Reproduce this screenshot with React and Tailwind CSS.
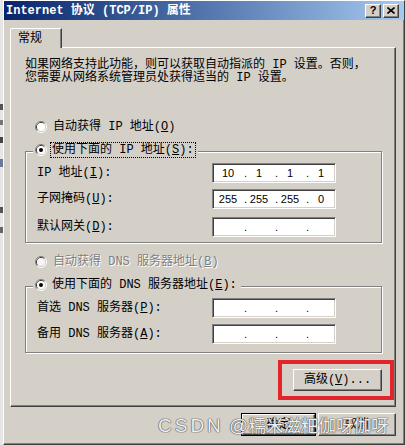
import React from 'react';

const font = "font-['Liberation_Mono','Noto_Sans_CJK_SC',monospace]";

const Radio = ({ checked, disabled }) => (
  <svg width="12" height="12" viewBox="0 0 12 12" className="shrink-0">
    <path d="M2.11 9.89A5.5 5.5 0 0 1 9.89 2.11" fill="none" stroke="#808080" />
    <path d="M9.89 2.11A5.5 5.5 0 0 1 2.11 9.89" fill="none" stroke="#ffffff" />
    <path d="M2.82 9.18A4.5 4.5 0 0 1 9.18 2.82" fill="none" stroke="#404040" />
    <path d="M9.18 2.82A4.5 4.5 0 0 1 2.82 9.18" fill="none" stroke="#d4d0c8" />
    <circle cx="6" cy="6" r="4" fill={disabled ? '#f4f4f4' : '#ffffff'} />
    {checked && <circle cx="6" cy="6" r="2" fill="#000000" />}
  </svg>
);

const IpBox = ({ parts = ['', '', '', ''] }) => (
  <div className="w-[124px] h-[20px] shrink-0 flex items-center pl-[4px] bg-white border border-t-[#808080] border-l-[#808080] border-b-white border-r-white shadow-[inset_1px_1px_0_#404040,inset_-1px_-1px_0_#d4d0c8] font-['Liberation_Sans',sans-serif] text-[11px] text-black">
    {parts.map((p, i) => (
      <React.Fragment key={i}>
        <span className="w-[22px] text-center">{p}</span>
        {i < 3 && <span className="ml-[4px] w-[5px] text-center">.</span>}
      </React.Fragment>
    ))}
  </div>
);

const FieldRow = ({ label, parts, className }) => (
  <div className={`flex items-center h-[20px] pl-[11px] ${className}`}>
    <span className="w-[175px] whitespace-pre">{label}</span>
    <IpBox parts={parts} />
  </div>
);

const Raised = ({ children, className }) => (
  <div className={`flex items-center justify-center bg-[#d4d0c8] border border-t-white border-l-white border-r-[#404040] border-b-[#404040] shadow-[inset_-1px_-1px_0_#808080] ${className}`}>
    {children}
  </div>
);

const App = () => {
  return (
    <div className={`relative w-[405px] h-[445px] flex overflow-hidden bg-[#d4d0c8] text-[12px] text-black ${font}`}>
      {/* window behind */}
      <div className="w-[3px] shrink-0 flex flex-col bg-[#e6e6e6]">
        <div className="h-[104px]" />
        <div className="h-[6px] bg-[#555]" />
        <div className="h-[10px]" />
        <div className="h-[5px] bg-[#777]" />
        <div className="h-[12px]" />
        <div className="h-[6px] bg-[#444]" />
        <div className="h-[16px]" />
        <div className="h-[8px] bg-[#6b7a99]" />
        <div className="h-[40px]" />
        <div className="h-[6px] bg-[#555]" />
        <div className="h-[14px]" />
        <div className="h-[6px] bg-[#666]" />
      </div>

      <div className="flex-1 flex flex-col border-l border-t border-r border-b border-white border-r-[#404040] border-b-[#404040] shadow-[inset_-1px_-1px_0_#808080]">
        {/* title bar */}
        <div className="h-[19px] shrink-0 flex items-center pl-[2px] pr-[5px] bg-linear-to-r from-[#0a246a] to-[#a6caf0]">
          <span className="font-bold text-white text-[12px] whitespace-pre">Internet 协议 (TCP/IP) 属性</span>
          <div className="ml-auto flex gap-[2px]">
            <Raised className="w-[16px] h-[14px]">
              <span className="font-['Liberation_Sans',sans-serif] font-bold text-[11px] leading-none">?</span>
            </Raised>
            <Raised className="w-[16px] h-[14px]">
              <svg width="8" height="7" viewBox="0 0 8 7">
                <path d="M0.5 0.5L7.5 6.5M7.5 0.5L0.5 6.5" stroke="#000" strokeWidth="1.6" />
              </svg>
            </Raised>
          </div>
        </div>

        <div className="flex-1 flex flex-col pl-[6px] pr-[8px] pt-[8px]">
          {/* tab */}
          <div className="relative z-10 -mb-[1px] w-[52px] h-[20px] flex items-center pl-[7px] bg-[#d4d0c8] border-t border-l border-r border-white border-r-[#404040] rounded-tl-[2px] shadow-[inset_-1px_0_0_#808080]">
            常规
          </div>

          {/* panel */}
          <div className="h-[360px] shrink-0 flex flex-col border border-t-white border-l-white border-r-[#404040] border-b-[#404040] shadow-[inset_-1px_-1px_0_#808080]">
            <p className="mt-[11px] ml-[14px] leading-[13px] whitespace-pre">
              如果网络支持此功能，则可以获取自动指派的 IP 设置。否则，
              <br />
              您需要从网络系统管理员处获得适当的 IP 设置。
            </p>

            <div className="mt-[34px] ml-[24px] h-[16px] flex items-center gap-[6px]">
              <Radio />
              <span className="whitespace-pre">自动获得 IP 地址(<u>O</u>)</span>
            </div>

            {/* group 1 */}
            <div className="mt-[16px] ml-[14px] mr-[13px] pb-[5px] border border-[#808080] shadow-[inset_1px_1px_0_#fff,1px_1px_0_#fff]">
              <div className="-mt-[10px] ml-[7px] w-fit h-[16px] flex items-center gap-[4px] pl-[2px] pr-[3px] bg-[#d4d0c8]">
                <Radio checked />
                <span className="px-[1px] leading-[14px] whitespace-pre outline outline-1 outline-dotted outline-black">
                  使用下面的 IP 地址(<u>S</u>):
                </span>
              </div>
              <FieldRow className="mt-[5px]" label={<>IP 地址(<u>I</u>):</>} parts={['10', '1', '1', '1']} />
              <FieldRow className="mt-[6px]" label={<>子网掩码(<u>U</u>):</>} parts={['255', '255', '255', '0']} />
              <FieldRow className="mt-[8px]" label={<>默认网关(<u>D</u>):</>} />
            </div>

            <div className="mt-[11px] ml-[24px] h-[16px] flex items-center gap-[6px] text-[#808080] [text-shadow:1px_1px_0_#ffffff]">
              <Radio disabled />
              <span className="whitespace-pre">自动获得 DNS 服务器地址(<u>B</u>)</span>
            </div>

            {/* group 2 */}
            <div className="mt-[16px] ml-[14px] mr-[13px] pb-[8px] border border-[#808080] shadow-[inset_1px_1px_0_#fff,1px_1px_0_#fff]">
              <div className="-mt-[10px] ml-[7px] w-fit h-[16px] flex items-center gap-[5px] pl-[2px] pr-[4px] bg-[#d4d0c8]">
                <Radio checked />
                <span className="whitespace-pre">使用下面的 DNS 服务器地址(<u>E</u>):</span>
              </div>
              <FieldRow className="mt-[5px]" label={<>首选 DNS 服务器(<u>P</u>):</>} />
              <FieldRow className="mt-[6px]" label={<>备用 DNS 服务器(<u>A</u>):</>} />
            </div>

            <div className="mt-[7px] mr-[1px] flex justify-end">
              <div className="border-4 border-[#e3242b] pt-[5px] pb-[5px] pl-[11px] pr-[8px]">
                <Raised className="w-[89px] h-[22px]">
                  <span className="whitespace-pre">高级(<u>V</u>)...</span>
                </Raised>
              </div>
            </div>
          </div>

          {/* dialog buttons */}
          <div className="mt-[6px] flex justify-end gap-[2px]">
            <div className="w-[75px] h-[23px] border border-black flex">
              <Raised className="flex-1">确定</Raised>
            </div>
            <Raised className="w-[78px] h-[23px]">取消</Raised>
          </div>
        </div>
      </div>

      {/* watermark */}
      <div className="absolute left-[158px] top-[413px] flex items-baseline whitespace-pre leading-[26px] font-['Liberation_Sans','Noto_Sans_CJK_SC',sans-serif] text-[#f0f0f0] [text-shadow:0_0_1px_#505050,0_0_1px_#505050,0_0_1px_#505050]">
        <span className="text-[19px] tracking-[3px]">CSDN</span>
        <span className="text-[19px]"> @</span>
        <span className="text-[17.5px]">糯米滋粑伽呀伽呀</span>
      </div>
    </div>
  );
};

export default App;
